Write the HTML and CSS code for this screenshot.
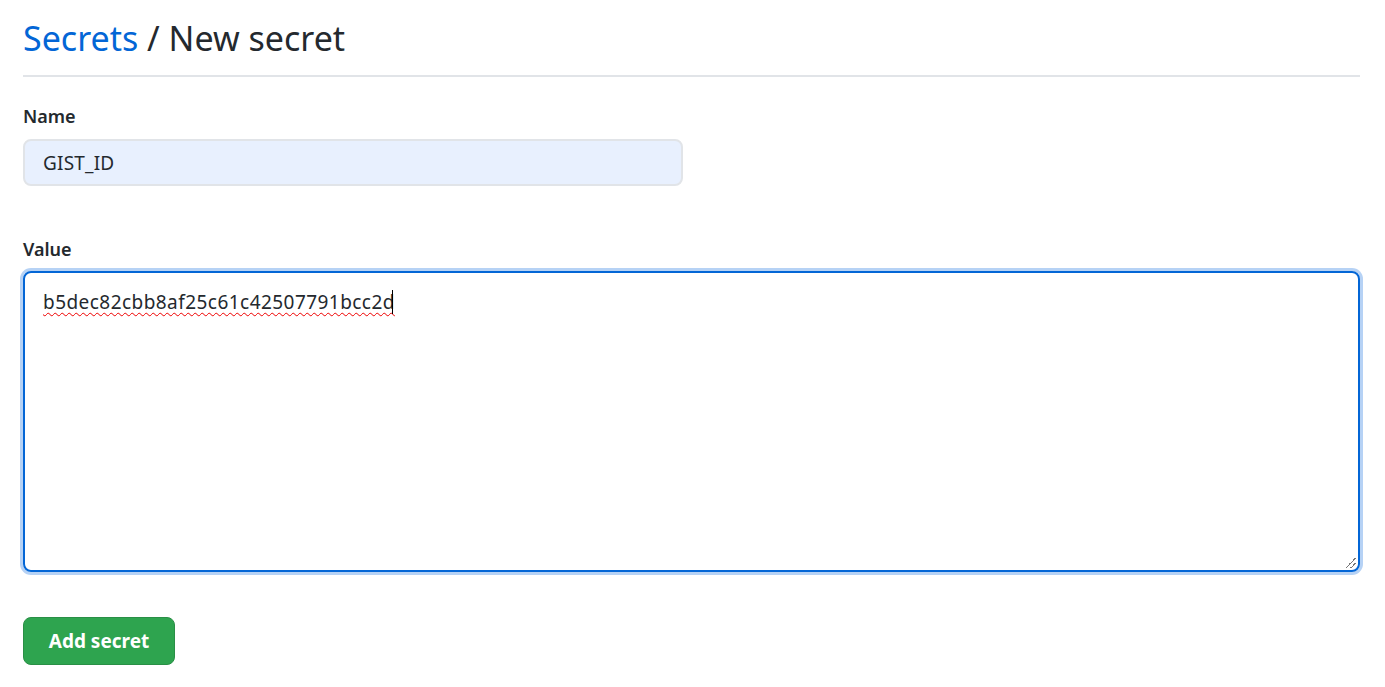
FILE: index.html
```html
<!DOCTYPE html>
<html lang="en">
<head>
<meta charset="utf-8">
<title>New secret</title>
<link rel="stylesheet" href="styles.css">
</head>
<body>
<main class="page">
  <h1 class="title"><a class="crumb" href="#">Secrets</a> / New secret</h1>
  <form class="form">
    <div class="field">
      <label class="label" for="name">Name</label>
      <input class="input" id="name" type="text" value="GIST_ID">
    </div>
    <div class="field field-value">
      <label class="label">Value</label>
      <div class="textarea" role="textbox" aria-multiline="true"><span class="misspelled">b5dec82cbb8af25c61c42507791bcc2d</span><span class="caret"></span><span class="grip"></span></div>
    </div>
    <button class="btn" type="button">Add secret</button>
  </form>
</main>
</body>
</html>
```

FILE: styles.css
```css
* { box-sizing: border-box; }
html, body { margin: 0; background: #fff; }
body {
  font-family: "Noto Sans", "Open Sans", "Liberation Sans", sans-serif;
  color: #24292e;
}
.page {
  padding: 14px 25px 0 23px;
}
.title {
  margin: 0;
  padding-bottom: 12px;
  font-size: 34px;
  font-weight: 400;
  line-height: 49px;
  border-bottom: 2px solid #e1e4e8;
}
.crumb { color: #0366d6; text-decoration: none; }
.form { padding-top: 26px; }
.field { display: flex; flex-direction: column; }
.label {
  font-size: 18px;
  font-weight: 600;
  line-height: 26px;
  margin-bottom: 10px;
}
.input {
  width: 660px;
  height: 47px;
  padding: 0 18px;
  font: inherit;
  font-size: 19px;
  letter-spacing: 0.2px;
  color: #24292e;
  background: #e8f0fe;
  border: 2px solid #e1e4e8;
  border-radius: 8px;
  outline: none;
}
.field-value { margin-top: 50px; }
.field-value .label { margin-bottom: 9px; }
.textarea {
  position: relative;
  height: 301px;
  padding: 14px 18px;
  font-size: 19px;
  letter-spacing: 0.45px;
  line-height: 30px;
  border: 2px solid #0366d6;
  border-radius: 8px;
  box-shadow: 0 0 0 3px #b6d2f5;
}
.misspelled {
  text-decoration: underline wavy #e00;
  text-decoration-thickness: 1px;
  text-underline-offset: 3px;
}
.caret {
  display: inline-block;
  width: 1px;
  height: 24px;
  margin-left: -3px;
  vertical-align: -5px;
  background: #000;
}
.grip {
  position: absolute;
  right: 2px;
  bottom: 2px;
  width: 10px;
  height: 10px;
  background: linear-gradient(135deg, transparent 45%, #777 45%, #777 52%, transparent 52%, transparent 70%, #777 70%, #777 77%, transparent 77%);
}
.btn {
  margin-top: 45px;
  width: 152px;
  height: 48px;
  font: inherit;
  font-size: 19px;
  font-weight: 700;
  color: #fff;
  background: #2ea44f;
  border: 1px solid #2a8f46;
  border-radius: 8px;
  cursor: pointer;
}
```
